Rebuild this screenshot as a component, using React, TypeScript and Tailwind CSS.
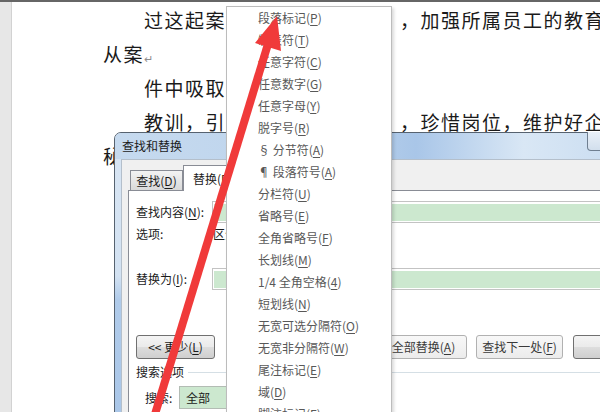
const menuItems: [string, string][] = [
  ["段落标记", "P"],
  ["制表符", "T"],
  ["任意字符", "C"],
  ["任意数字", "G"],
  ["任意字母", "Y"],
  ["脱字号", "R"],
  ["§ 分节符", "A"],
  ["¶ 段落符号", "A"],
  ["分栏符", "U"],
  ["省略号", "E"],
  ["全角省略号", "F"],
  ["长划线", "M"],
  ["1/4 全角空格", "4"],
  ["短划线", "N"],
  ["无宽可选分隔符", "O"],
  ["无宽非分隔符", "W"],
  ["尾注标记", "E"],
  ["域", "D"],
  ["脚注标记", "F"],
];

function Key({ k }: { k: string }) {
  return <span className="underline underline-offset-[2px]">{k}</span>;
}

function Field({ className = "" }: { className?: string }) {
  return (
    <div className={`h-[22px] flex-1 border border-[#c3c3c3] bg-white px-[1px] pt-[2px] pb-[1px] ${className}`}>
      <div className="h-full bg-[#cce8cf]" />
    </div>
  );
}

function Button({ children, left, strong }: { children: React.ReactNode; left: number; strong?: boolean }) {
  return (
    <div
      className={
        strong
          ? "flex h-[24px] w-[87px] shrink-0 items-center justify-center rounded-[3px] border border-[#707070] bg-[linear-gradient(180deg,#f4f4f4_0%,#ebebeb_48%,#dddddd_52%,#cfcfcf_100%)] text-[#1b1b1b]"
          : "flex h-[24px] w-[87px] shrink-0 items-center justify-center rounded-[3px] border border-[#b1b1b1] bg-[linear-gradient(180deg,#f8f8f8_0%,#f2f2f2_50%,#ececec_100%)] text-[#3a3a3a]"
      }
      style={{ marginLeft: left }}
    >
      {children}
    </div>
  );
}

export default function App() {
  return (
    <div className="relative flex h-[412px] w-[600px] overflow-hidden border-t-2 border-[#666666] bg-white font-['Noto_Sans_CJK_SC',sans-serif]">
      {/* gutter */}
      <div className="w-[12px] shrink-0 border-r border-[#d2d2d2] bg-[#e7e7e7]" />

      {/* document page */}
      <div className="flex-1 pl-[91px] pt-[1px] text-[19px] tracking-[1.5px] text-[#1a1a1a]">
        <div className="flex h-[34px] items-center whitespace-nowrap">
          <span className="w-[297px] shrink-0 pl-[41px]">过这起案</span>
          <span>，加强所属员工的教育</span>
        </div>
        <div className="flex h-[34px] items-center whitespace-nowrap">
          <span>从案</span>
          <span className="mt-[8px] text-[11px] text-[#8c8c8c]">↵</span>
        </div>
        <div className="flex h-[34px] items-center whitespace-nowrap">
          <span className="pl-[41px]">件中吸取</span>
        </div>
        <div className="flex h-[34px] items-center whitespace-nowrap">
          <span className="w-[297px] shrink-0 pl-[41px]">教训，引</span>
          <span>，珍惜岗位，维护好企</span>
        </div>
        <div className="flex h-[34px] items-center whitespace-nowrap">
          <span>秘</span>
        </div>
      </div>

      {/* find and replace dialog */}
      <div className="absolute left-[114px] top-[130px] z-0 h-[300px] w-[540px] rounded-t-[7px] border border-[#56626f] bg-[linear-gradient(180deg,#d8e5f3_0%,#d3e2f2_48%,#b0cbea_56%,#a9c6e8_100%)] text-[12px] text-[#1b1b1b]">
        <div className="relative flex h-[26px] items-center rounded-t-[6px] bg-[linear-gradient(90deg,#c6daef_0%,#bcd3ec_40%,#a9c6e8_56%,#d9e7f5_76%,#c4d9ef_100%)] pl-[7px]">
          查找和替换
          <div className="absolute left-[472px] top-[-1px] h-[19px] w-[50px] rounded-b-[4px] border border-t-0 border-[#6f7f90] bg-[linear-gradient(180deg,#e9f0f8_0%,#d2dfed_100%)]" />
        </div>
        <div className="ml-[6px] h-full border-l border-t border-[#b4bfcb] bg-[#f0f0f0] pl-[6px]">
          {/* tabs */}
          <div className="relative z-10 flex h-[30px] items-end pl-[2px]">
            <div className="flex h-[20px] w-[53px] items-center justify-center border border-b-0 border-[#898c95] bg-[linear-gradient(180deg,#f3f3f3_0%,#e6e6e6_50%,#d9d9d9_100%)]">
              查找(<Key k="D" />)
            </div>
            <div className="-mb-px flex h-[26px] w-[60px] items-center border border-b-0 border-[#898c95] bg-white pl-[9px]">
              替换(<Key k="P" />)
            </div>
          </div>
          {/* panel */}
          <div className="h-[300px] border border-[#898c95] bg-white pl-[7px] pt-[10px]">
            <div className="flex h-[22px] items-center">
              <span className="w-[76px] shrink-0">
                查找内容(<Key k="N" />):
              </span>
              <Field />
            </div>
            <div className="mt-[1px] flex h-[20px] items-center">
              <span className="w-[76px] shrink-0">选项:</span>
              <span className="pl-[1px]">区分全/半角</span>
            </div>
            <div className="mt-[24px] flex h-[22px] items-center">
              <span className="w-[76px] shrink-0">
                替换为(<Key k="I" />):
              </span>
              <Field />
            </div>
            <div className="mt-[45px] flex h-[24px] items-center">
              <div className="flex h-[24px] w-[79px] shrink-0 items-center justify-center rounded-[3px] border border-[#707070] bg-[linear-gradient(180deg,#f4f4f4_0%,#ebebeb_48%,#dddddd_52%,#cfcfcf_100%)]">
                &lt;&lt; 更少(<Key k="L" />)
              </div>
              <Button left={68}>替换(<Key k="R" />)</Button>
              <Button left={10}>全部替换(<Key k="A" />)</Button>
              <Button left={9}>查找下一处(<Key k="F" />)</Button>
              <Button left={10} strong>
                取消
              </Button>
            </div>
            <div className="mt-[6px] flex h-[14px] items-center">
              <span>搜索选项</span>
              <div className="ml-[4px] h-px flex-1 bg-[#d5dfe5]" />
            </div>
            <div className="mt-[7px] flex h-[23px] items-center pl-[9px]">
              <span className="w-[34px] shrink-0">搜索:</span>
              <div className="flex h-[23px] w-[150px] items-center border border-[#b3bcb4] bg-[#cce8cf] pl-[6px]">全部</div>
            </div>
          </div>
        </div>
      </div>

      {/* special character menu */}
      <div className="absolute left-[226px] top-[4px] z-10 h-[430px] w-[166px] border border-[#bcbcbc] bg-white shadow-[2px_2px_3px_rgba(0,0,0,0.15)]">
        {menuItems.map(([label, key], i) => (
          <div key={i} className="flex h-[22px] items-center whitespace-nowrap pl-[31px] text-[12px] text-[#585858]">
            {label}(<Key k={key} />)
          </div>
        ))}
      </div>

      {/* red arrow */}
      <svg className="pointer-events-none absolute left-0 top-0 z-20" width="600" height="412" viewBox="0 0 600 412">
        <line x1="152" y1="422" x2="268" y2="42" stroke="#f03a3a" strokeWidth="8" />
        <polygon points="277,14 255,41 281,49" fill="#f03a3a" />
      </svg>
    </div>
  );
}
